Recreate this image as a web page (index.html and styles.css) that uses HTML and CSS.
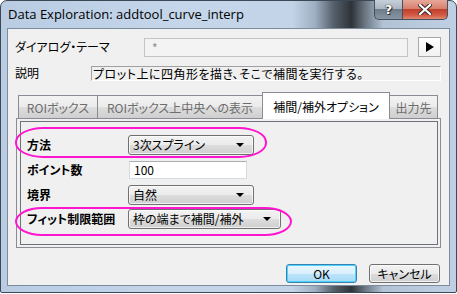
FILE: index.html
```html
<!DOCTYPE html>
<html lang="ja">
<head>
<meta charset="utf-8">
<title>Data Exploration</title>
<link rel="stylesheet" href="styles.css">
</head>
<body>
<div class="window">
  <div class="titlebar">
    <span class="title">Data Exploration: addtool_curve_interp</span>
    <div class="caption-btns">
      <div class="cbtn help"><span>?</span></div>
      <div class="cbtn close">
        <svg width="14" height="11" viewBox="0 0 14 11"><path d="M2 1 L12 10 M12 1 L2 10" stroke="#3a2a28" stroke-width="4.2" stroke-linecap="square"/><path d="M2 1 L12 10 M12 1 L2 10" stroke="#ffffff" stroke-width="2.2" stroke-linecap="square"/></svg>
      </div>
    </div>
  </div>
  <div class="client">
    <div class="row theme-row">
      <span class="lbl theme-lbl">ダイアログ・テーマ</span>
      <div class="theme-input">*</div>
      <div class="arrow-btn"><svg width="8" height="10" viewBox="0 0 8 10"><path d="M0 0 L8 5 L0 10 Z" fill="#000"/></svg></div>
    </div>
    <div class="row desc-row">
      <span class="lbl desc-lbl">説明</span>
      <div class="desc-box">プロット上に四角形を描き、そこで補間を実行する。</div>
    </div>
    <div class="tabs">
      <div class="tab t1">ROIボックス</div>
      <div class="tab t2">ROIボックス上中央への表示</div>
      <div class="tab t3 active">補間/補外オプション</div>
      <div class="tab t4">出力先</div>
    </div>
    <div class="panel">
      <div class="group">
        <div class="form-row">
          <span class="flbl">方法</span>
          <div class="combo w125"><span>3次スプライン</span><i class="caret"></i></div>
        </div>
        <div class="form-row r2">
          <span class="flbl">ポイント数</span>
          <div class="textbox">100</div>
        </div>
        <div class="form-row r3">
          <span class="flbl">境界</span>
          <div class="combo w125"><span>自然</span><i class="caret"></i></div>
        </div>
        <div class="form-row r4">
          <span class="flbl">フィット制限範囲</span>
          <div class="combo w152"><span>枠の端まで補間/補外</span><i class="caret"></i></div>
        </div>
        <div class="mark m1"></div>
        <div class="mark m2"></div>
      </div>
    </div>
    <div class="buttons">
      <div class="btn ok">OK</div>
      <div class="btn cancel">キャンセル</div>
    </div>
  </div>
</div>
</body>
</html>
```

FILE: styles.css
```css
* { box-sizing: border-box; }
html, body { margin: 0; padding: 0; background: #ffffff; }
body {
  width: 457px; height: 294px; overflow: hidden;
  font-family: "Noto Sans CJK JP", "Noto Sans", sans-serif;
  font-size: 12px;
  font-feature-settings: "palt";
  color: #000;
}
.window {
  width: 457px; height: 293px;
  border: 1px solid #3d4856;
  border-radius: 7px 7px 2px 2px;
  background: linear-gradient(90deg, #b9cce2 0%, #c5d6ea 40%, #c3d4e8 64%, #9eafc2 69%, #56616c 73%, #2e3338 77%, #6b7682 80%, #b2c3d6 84%, #bfd0e4 100%);
  display: flex; flex-direction: column;
}
.titlebar {
  height: 27px; flex: none;
  display: flex; align-items: flex-start;
  padding-left: 7px;
}
.title {
  font-family: "Open Sans", "Liberation Sans", sans-serif;
  font-size: 13px;
  line-height: 16px;
  margin-top: 5px;
  color: #000;
  white-space: nowrap;
}
.caption-btns {
  margin-left: auto; margin-right: 8px;
  display: flex;
  margin-top: -1px;
}
.cbtn {
  height: 20px;
  border: 1px solid #45505e;
  border-top: none;
  display: flex; align-items: center; justify-content: center;
}
.help {
  width: 28px;
  border-radius: 0 0 0 5px;
  background: linear-gradient(#c6d0da 0%, #aab6c2 45%, #6f7b88 50%, #8896a4 100%);
  border-right: none;
}
.help span {
  font-family: "DejaVu Sans", sans-serif;
  font-weight: bold; font-size: 13px; color: #fff;
  text-shadow: 0 0 1px #222, 0 0 1px #222, 1px 1px 0 #333;
  line-height: 14px;
}
.close {
  width: 46px;
  border-radius: 0 0 5px 0;
  background: linear-gradient(#e7a89a 0%, #d8806d 45%, #c0402c 50%, #d35a44 80%, #e08a72 100%);
}
.client {
  flex: 1;
  margin: 0 6px 6px 6px;
  border: 1px solid #7c8c9f;
  background: #f0f0f0;
  display: flex; flex-direction: column;
  padding: 0 8px 0 7px;
}
.row { display: flex; align-items: center; }
.theme-row { margin-top: 8px; height: 20px; }
.theme-lbl { width: 129px; flex: none; }
.lbl { line-height: 14px; }
.theme-input {
  width: 264px; height: 19px;
  border: 1px solid #c4c4c4;
  background: #f3f3f3;
  color: #8a8a8a;
  padding-left: 7px;
  line-height: 17px;
  font-size: 12px;
}
.arrow-btn {
  width: 23px; height: 20px; margin-left: 10px;
  border: 1px solid #a9a9a9;
  background: linear-gradient(#ffffff, #f2f2f2);
  display: flex; align-items: center; justify-content: center;
}
.desc-row { margin-top: 9px; height: 14px; }
.desc-lbl { width: 76px; flex: none; }
.desc-box {
  flex: 1; height: 15px;
  border-top: 1px solid #a0a0a0; border-left: 1px solid #a0a0a0;
  border-right: 1px solid #ffffff; border-bottom: 1px solid #ffffff;
  line-height: 13px; padding-left: 1px;
  letter-spacing: 0.5px;
  white-space: nowrap;
}
.tabs {
  display: flex; margin-top: 12px; margin-left: 3px;
  height: 27px; align-items: flex-start;
  position: relative; z-index: 2;
}
.tab {
  height: 23px; margin-top: 3px;
  border: 1px solid #898c95; border-bottom: none;
  background: linear-gradient(#f3f3f3 0%, #ebebeb 50%, #dddddd 51%, #cfcfcf 100%);
  color: #6d6d6d;
  display: flex; align-items: center; justify-content: center;
  font-size: 12px; white-space: nowrap;
  margin-right: -1px;
}
.t1 { width: 80px; }
.t2 { width: 166px; }
.t3 { width: 128px; }
.t4 { width: 49px; }
.tab.active {
  height: 27px; margin-top: 0;
  background: #ffffff; color: #000;
  position: relative; z-index: 3;
}
.panel {
  margin-left: 1px; margin-top: -1px;
  width: 425px; height: 130px;
  border: 1px solid #898c95;
  background: #f0f0f0;
  padding: 2px 2px 2px 3px;
}
.group {
  position: relative;
  height: 100%;
  border: 1px solid #6e7178;
  padding: 13px 0 0 6px;
}
.form-row { display: flex; align-items: center; height: 20px; }
.r2 { margin-top: 6px; height: 18px; }
.r3 { margin-top: 6px; }
.r4 { margin-top: 4px; }
.flbl { width: 101px; flex: none; font-weight: bold; line-height: 14px; }
.combo {
  height: 20px;
  border: 1px solid #707070; border-radius: 3px;
  background: linear-gradient(#f2f2f2 0%, #ebebeb 50%, #dddddd 51%, #cfcfcf 100%);
  display: flex; align-items: center;
  padding-left: 4px; padding-right: 9px;
  box-shadow: inset 0 0 0 1px rgba(255,255,255,0.7);
}
.combo span { flex: 1; line-height: 14px; white-space: nowrap; }
.w125 { width: 126px; }
.w152 { width: 153px; }
.caret {
  width: 0; height: 0;
  border-left: 4px solid transparent; border-right: 4px solid transparent;
  border-top: 4px solid #000;
}
.textbox {
  width: 118px; height: 18px; margin-left: 1px;
  border: 1px solid #d5dbe3; border-top-color: #abadb3;
  background: #fff;
  line-height: 16px; padding-left: 4px;
}
.mark {
  position: absolute;
  border: 2px solid #ff14cf;
  border-radius: 28px / 15px;
}
.m1 { left: -6px; top: 5px; width: 252px; height: 31px; }
.m2 { left: -6px; top: 85px; width: 277px; height: 29px; }
.buttons {
  margin-top: auto; margin-bottom: 2px;
  display: flex; justify-content: flex-end; gap: 12px;
  padding-right: 1px;
}
.btn {
  width: 71px; height: 19px;
  border: 1px solid #707070; border-radius: 3px;
  background: linear-gradient(#f2f2f2 0%, #ebebeb 50%, #dddddd 51%, #cfcfcf 100%);
  display: flex; align-items: center; justify-content: center;
  font-size: 12px; line-height: 14px;
  box-shadow: inset 0 0 0 1px rgba(255,255,255,0.7);
}
.btn.ok {
  border-color: #3c7fb1;
  background: linear-gradient(#eaf6fd 0%, #d9f0fc 50%, #bee6fd 51%, #a7d9f5 100%);
  box-shadow: inset 0 0 0 1px #48d4fb;
}
```
